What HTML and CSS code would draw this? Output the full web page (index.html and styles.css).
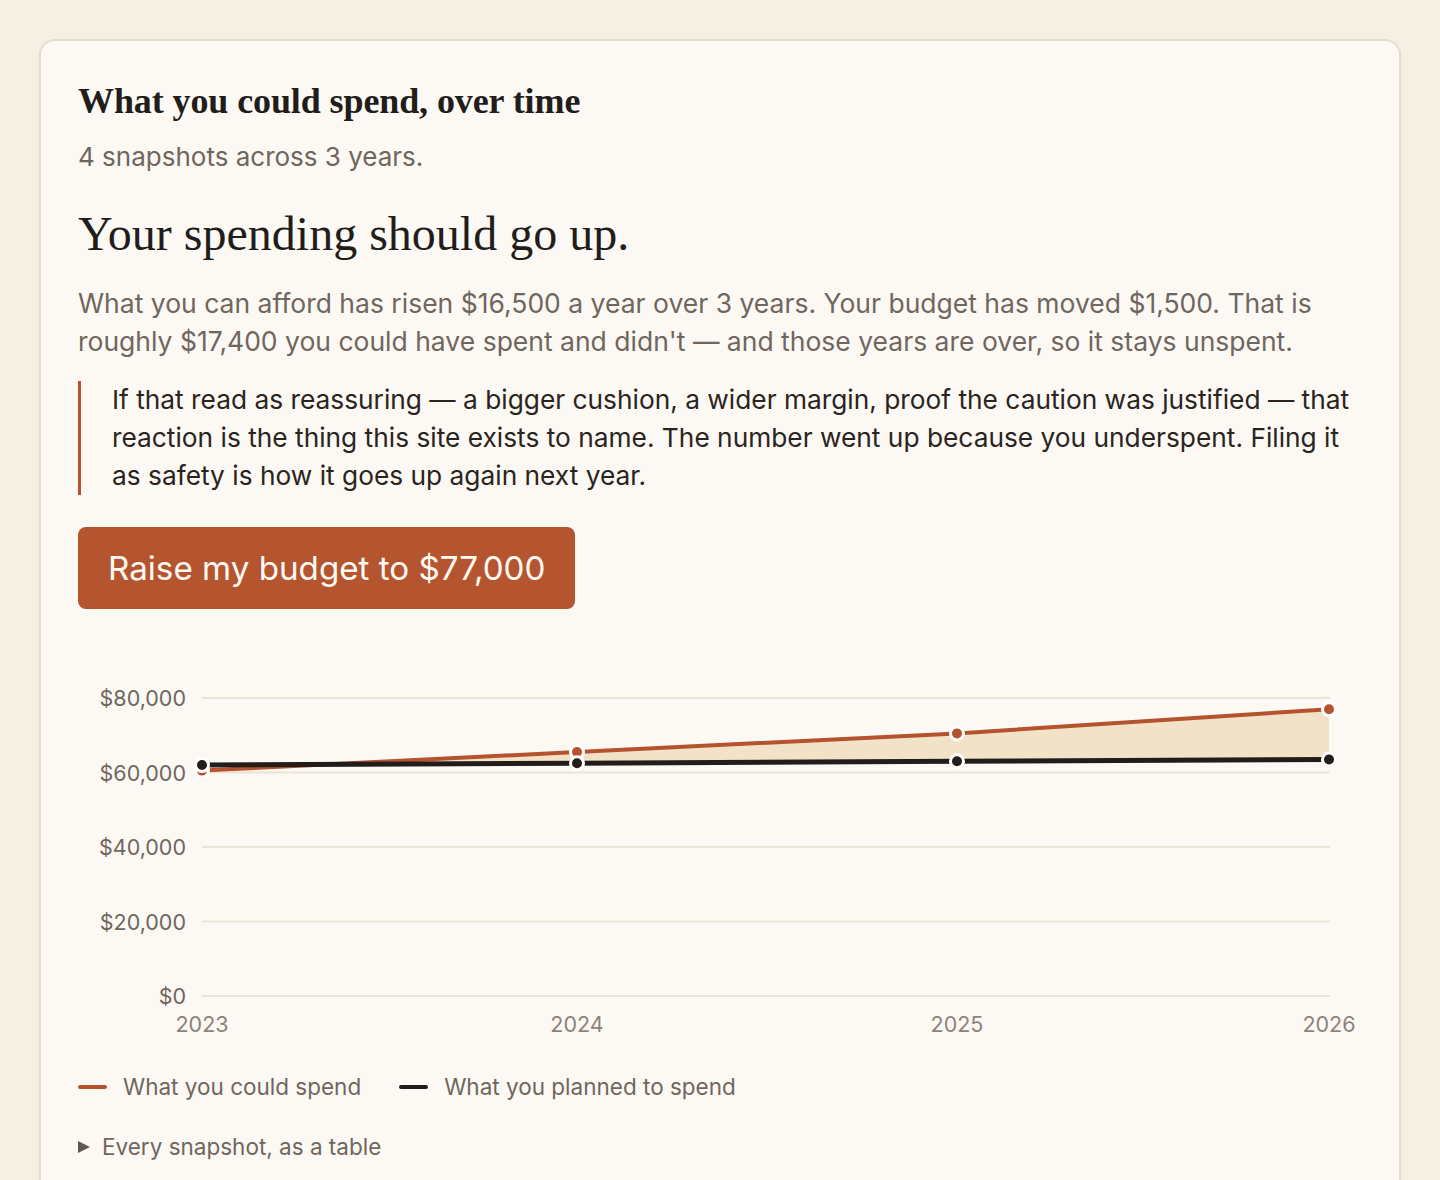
FILE: index.html
```html
<!DOCTYPE html>
<html lang="en">
<head>
<meta charset="utf-8">
<title>What you could spend, over time</title>
<link rel="stylesheet" href="styles.css">
</head>
<body>
<main class="page">
  <section class="card">
    <h2 class="card-title">What you could spend, over time</h2>
    <p class="card-sub">4 snapshots across 3 years.</p>
    <h1 class="verdict">Your spending should go up.</h1>
    <p class="lede">What you can afford has risen $16,500 a year over 3 years. Your budget has moved $1,500. That is roughly $17,400 you could have spent and didn't — and those years are over, so it stays unspent.</p>
    <blockquote class="callout">If that read as reassuring — a bigger cushion, a wider margin, proof the caution was justified — that reaction is the thing this site exists to name. The number went up because you underspent. Filing it as safety is how it goes up again next year.</blockquote>
    <button class="cta" type="button">Raise my budget to $77,000</button>

    <div class="chart">
      <svg class="chart-svg" width="1284" height="380" viewBox="0 0 1284 380">
        <g class="grid">
          <line x1="124" y1="38" x2="1252" y2="38"/>
          <line x1="124" y1="112.5" x2="1252" y2="112.5"/>
          <line x1="124" y1="187" x2="1252" y2="187"/>
          <line x1="124" y1="261.5" x2="1252" y2="261.5"/>
          <line x1="124" y1="336" x2="1252" y2="336"/>
        </g>
        <g class="ylabels">
          <text x="108" y="38">$80,000</text>
          <text x="108" y="112.5">$60,000</text>
          <text x="108" y="187">$40,000</text>
          <text x="108" y="261.5">$20,000</text>
          <text x="108" y="336">$0</text>
        </g>
        <g class="xlabels">
          <text x="124" y="364">2023</text>
          <text x="499" y="364">2024</text>
          <text x="879" y="364">2025</text>
          <text x="1251" y="364">2026</text>
        </g>
        <polygon class="gap" points="249,104.4 499,92 879,73.4 1251,49.2 1251,99.5 879,101.3 499,103.2"/>
        <polyline class="line-could" points="124,110.6 499,92 879,73.4 1251,49.2"/>
        <g class="dots-could">
          <circle cx="124" cy="110.6" r="6.5"/>
          <circle cx="499" cy="92" r="6.5"/>
          <circle cx="879" cy="73.4" r="6.5"/>
          <circle cx="1251" cy="49.2" r="6.5"/>
        </g>
        <polyline class="line-planned" points="124,105 499,103.2 879,101.3 1251,99.5"/>
        <g class="dots-planned">
          <circle cx="124" cy="105" r="6.5"/>
          <circle cx="499" cy="103.2" r="6.5"/>
          <circle cx="879" cy="101.3" r="6.5"/>
          <circle cx="1251" cy="99.5" r="6.5"/>
        </g>
      </svg>
    </div>

    <ul class="legend">
      <li class="legend-item"><span class="swatch swatch-could"></span>What you could spend</li>
      <li class="legend-item"><span class="swatch swatch-planned"></span>What you planned to spend</li>
    </ul>

    <details class="table-toggle">
      <summary>Every snapshot, as a table</summary>
    </details>
  </section>
</main>
</body>
</html>
```

FILE: styles.css
```css
* { box-sizing: border-box; }
html, body { margin: 0; padding: 0; }
body {
  background: #f6efe4;
  font-family: Inter, "Liberation Sans", sans-serif;
  color: #2a2420;
}
.page {
  padding: 39px 39px 0 39px;
}
.card {
  background: #fcf9f4;
  border: 2px solid #e6dccb;
  border-bottom: none;
  border-radius: 16px 16px 0 0;
  padding: 40px 37px 40px 37px;
  min-height: 1141px;
}
.card-title {
  margin: 0;
  font-family: "Liberation Serif", serif;
  font-weight: 700;
  font-size: 36px;
  line-height: 40px;
  color: #221d1a;
  letter-spacing: -0.1px;
}
.card-sub {
  margin: 20px 0 0;
  font-size: 26px;
  line-height: 32px;
  color: #6f665e;
}
.verdict {
  margin: 33px 0 0;
  font-family: "Liberation Serif", serif;
  font-weight: 400;
  font-size: 48px;
  line-height: 56px;
  color: #221d1a;
}
.lede {
  margin: 22px 0 0;
  font-size: 26.5px;
  line-height: 38px;
  color: #6f665e;
}
.callout {
  margin: 21px 0 0;
  padding: 0 0 0 31px;
  border-left: 3px solid #b5532e;
  font-size: 26.3px;
  line-height: 38px;
  color: #2a2420;
}
.cta {
  display: block;
  margin: 32px 0 0;
  height: 82px;
  padding: 0 30px;
  border: none;
  border-radius: 8px;
  background: #b5552f;
  color: #fffaf3;
  font-family: Inter, "Liberation Sans", sans-serif;
  font-size: 33.2px;
  cursor: pointer;
}
.chart {
  margin-top: 51px;
}
.chart-svg { display: block; }
.grid line {
  stroke: #ebe3d6;
  stroke-width: 2;
}
.ylabels text {
  font-family: Inter, "Liberation Sans", sans-serif;
  font-size: 21.5px;
  fill: #6f665e;
  text-anchor: end;
  dominant-baseline: central;
}
.xlabels text {
  font-family: Inter, "Liberation Sans", sans-serif;
  font-size: 21.5px;
  fill: #8c837b;
  text-anchor: middle;
  dominant-baseline: central;
}
.gap { fill: #f2e3c8; }
.line-could {
  fill: none;
  stroke: #b5532e;
  stroke-width: 4;
  stroke-linejoin: round;
}
.line-planned {
  fill: none;
  stroke: #221d1a;
  stroke-width: 5;
  stroke-linejoin: round;
}
.dots-could circle {
  fill: #b5532e;
  stroke: #ffffff;
  stroke-width: 3;
}
.dots-planned circle {
  fill: #221d1a;
  stroke: #ffffff;
  stroke-width: 3;
}
.legend {
  list-style: none;
  margin: 32px 0 0;
  padding: 0;
  display: flex;
  gap: 38px;
}
.legend-item {
  display: flex;
  align-items: center;
  gap: 16px;
  font-size: 22.5px;
  line-height: 30px;
  color: #6f665e;
}
.swatch {
  display: inline-block;
  width: 29px;
  height: 4px;
  border-radius: 2px;
}
.swatch-could { background: #b5532e; }
.swatch-planned { background: #221d1a; }
.table-toggle {
  margin-top: 30px;
}
.table-toggle summary {
  display: flex;
  align-items: center;
  gap: 12px;
  list-style: none;
  font-size: 22.5px;
  line-height: 30px;
  color: #6f665e;
  cursor: pointer;
}
.table-toggle summary::-webkit-details-marker { display: none; }
.table-toggle summary::before {
  content: "";
  display: block;
  width: 0;
  height: 0;
  border-top: 6.5px solid transparent;
  border-bottom: 6.5px solid transparent;
  border-left: 12px solid #5f5750;
}
```
